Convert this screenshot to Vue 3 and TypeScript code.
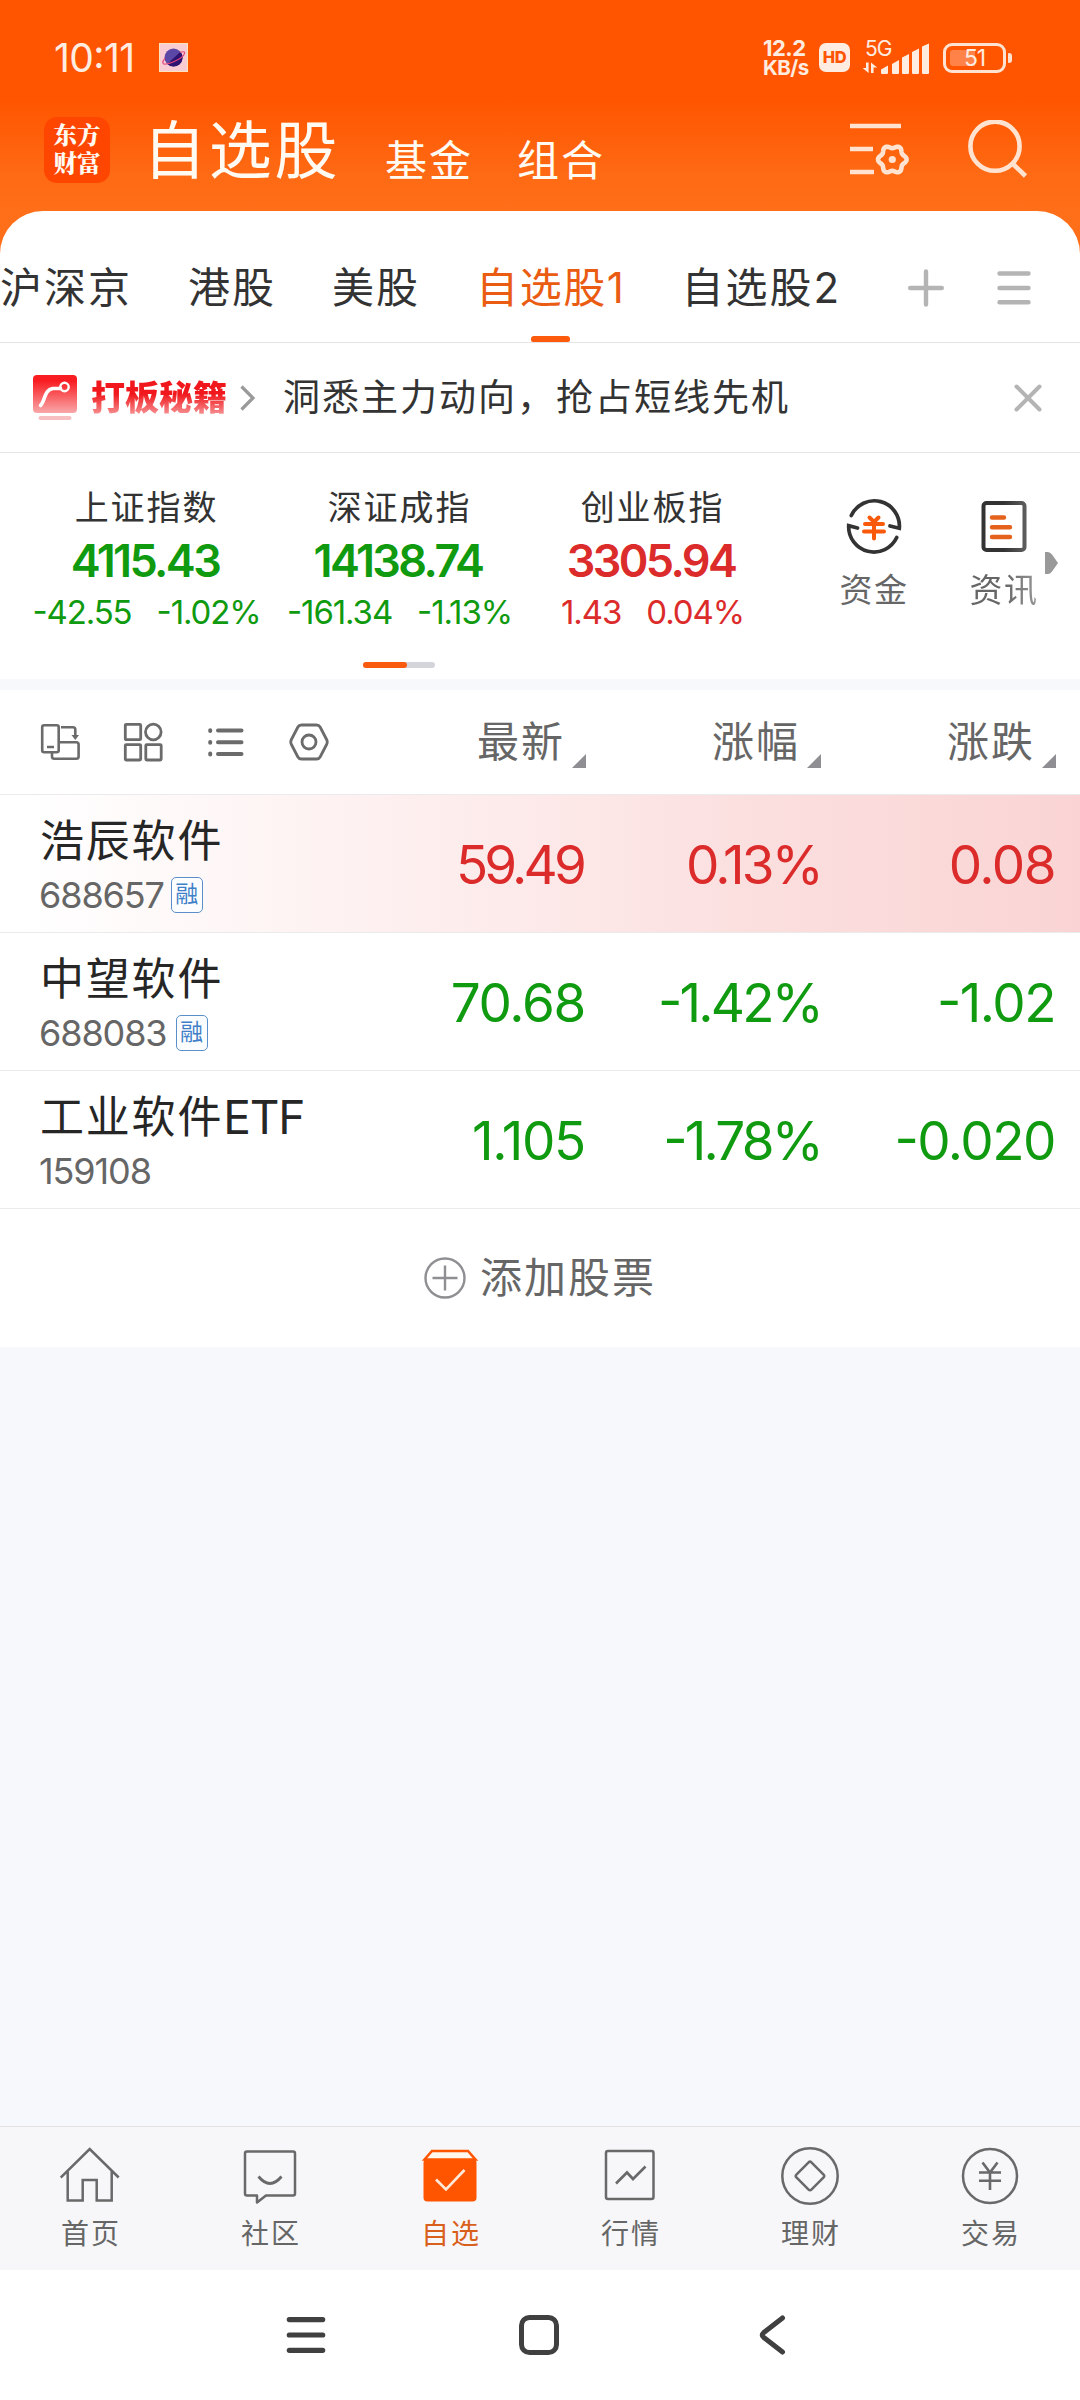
<script setup lang="ts">
interface IndexQuote {
  name: string
  price: string
  change: string
  percent: string
  trend: 'up' | 'down'
}

interface Stock {
  name: string
  suffix?: string
  code: string
  margin: boolean
  price: string
  percent: string
  change: string
  trend: 'up' | 'down'
  flash?: boolean
}

const marketTabs = ['沪深京', '港股', '美股', '自选股1', '自选股2']
const activeTab = '自选股1'

const indices: IndexQuote[] = [
  { name: '上证指数', price: '4115.43', change: '-42.55', percent: '-1.02%', trend: 'down' },
  { name: '深证成指', price: '14138.74', change: '-161.34', percent: '-1.13%', trend: 'down' },
  { name: '创业板指', price: '3305.94', change: '1.43', percent: '0.04%', trend: 'up' },
]

const columns = ['最新', '涨幅', '涨跌']

const stocks: Stock[] = [
  { name: '浩辰软件', code: '688657', margin: true, price: '59.49', percent: '0.13%', change: '0.08', trend: 'up', flash: true },
  { name: '中望软件', code: '688083', margin: true, price: '70.68', percent: '-1.42%', change: '-1.02', trend: 'down' },
  { name: '工业软件', suffix: 'ETF', code: '159108', margin: false, price: '1.105', percent: '-1.78%', change: '-0.020', trend: 'down' },
]

const navItems = [
  { key: 'home', label: '首页' },
  { key: 'community', label: '社区' },
  { key: 'watch', label: '自选' },
  { key: 'market', label: '行情' },
  { key: 'wealth', label: '理财' },
  { key: 'trade', label: '交易' },
]

// Six-lobed outline of the settings gear.
function gearPath(cx: number, cy: number, radius: number, depth: number): string {
  const points: string[] = []
  for (let deg = 0; deg < 360; deg += 5) {
    const a = (deg * Math.PI) / 180
    const r = radius + depth * Math.cos(6 * a)
    points.push(`${(cx + r * Math.cos(a)).toFixed(2)} ${(cy + r * Math.sin(a)).toFixed(2)}`)
  }
  return `M${points.join('L')}Z`
}
const gear = gearPath(42.3, 39.5, 12.8, 1.5)
</script>

<template>
  <div class="screen">
    <header class="top">
      <div class="status">
        <span class="clock">10:11</span>
        <svg class="planet" width="29" height="29" viewBox="0 0 29 29">
          <rect x=".5" y=".5" width="28" height="28" fill="#f8ccd2" stroke="#fbe3bd" />
          <circle cx="14.5" cy="14.5" r="9" fill="#5b47a5" />
          <path d="M21.5 8.8A9 9 0 0 1 8.3 21Z" fill="#2e1271" />
          <path d="M21 9.5c3-1.300 5-1 4.600.600-.6 3-6 6.600-11.500 8.900-5.500 2.200-10 3-10.300 1-.2-1.300 .8-3 2.200-4.500" fill="none" stroke="#e0457f" stroke-width="1.100" />
        </svg>
        <div class="speed"><span>12.2</span><span class="unit">KB/s</span></div>
        <span class="hd">HD</span>
        <div class="signal">
          <span class="net">5G</span>
          <svg width="68" height="32" viewBox="0 0 68 32" fill="#ffece0">
            <path d="M4 20.500h2.600V31L.6 26H4ZM9 31V20.500l6.200 5h-3.600V31Z" />
            <path d="M19 31v-3.500l7-4V31a1 1 0 0 1-1 1h-5a1 1 0 0 1-1-1ZM30 31V22l7-4v13a1 1 0 0 1-1 1h-5a1 1 0 0 1-1-1ZM40 31V15.500l7-3.500v19a1 1 0 0 1-1 1h-5a1 1 0 0 1-1-1ZM50 31V10l7-3.500V31a1 1 0 0 1-1 1h-5a1 1 0 0 1-1-1ZM60 31V4.500l7-3V31a1 1 0 0 1-1 1h-5a1 1 0 0 1-1-1Z" />
          </svg>
        </div>
        <div class="battery"><i></i><span>51</span></div>
        <b class="nub"></b>
      </div>

      <div class="titlebar">
        <div class="logo"><span>东方</span><span>财富</span></div>
        <h1>自选股</h1>
        <span class="sub">基金</span>
        <span class="sub second">组合</span>
        <svg class="filter" width="62" height="60" viewBox="0 0 62 60" fill="none" stroke="#ffe3d0" stroke-width="4.600">
          <path d="M0 6h51M0 29h23M0 52h24" />
          <path :d="gear" stroke-linejoin="round" />
          <circle cx="42.300" cy="39.500" r="3.600" fill="#ffe3d0" stroke="none" />
        </svg>
        <svg class="search" width="60" height="60" viewBox="0 0 60 60" fill="none" stroke="#ffe3d0" stroke-width="4.600">
          <circle cx="27" cy="26.200" r="24.600" />
          <path d="M44.500 43.500L57.500 56" />
        </svg>
      </div>
    </header>

    <section class="card">
      <nav class="tabs">
        <span v-for="tab in marketTabs" :key="tab" class="tab" :class="{ active: tab === activeTab }">{{ tab }}</span>
        <svg class="plus" width="36" height="38" viewBox="0 0 36 38" stroke="#b4b4b4" stroke-width="4.400" stroke-linecap="round">
          <path d="M2.200 19h31.600M18 2.500v33" />
        </svg>
        <svg class="menu" width="34" height="36" viewBox="0 0 34 36" stroke="#b4b4b4" stroke-width="4.400" stroke-linecap="round">
          <path d="M2.500 3.500h29M2.500 18h29M2.500 32.300h29" />
        </svg>
      </nav>

      <div class="promo">
        <svg width="44" height="46" viewBox="0 0 44 46" fill="none">
          <defs>
            <linearGradient id="promoRed" x1="0" y1="0" x2="0" y2="1">
              <stop offset=".15" stop-color="#f91c20" />
              <stop offset="1" stop-color="#f9a8aa" />
            </linearGradient>
          </defs>
          <rect width="44" height="38" rx="4" fill="url(#promoRed)" />
          <path d="M7.500 30.500C12 27 11 14.500 20 13.500h7.500" stroke="#fff" stroke-width="3.600" stroke-linecap="round" />
          <circle cx="31.500" cy="12" r="4.200" stroke="#fff" stroke-width="2.400" />
          <rect x="5.500" y="41" width="33" height="4" rx="2" fill="#f7bfc1" />
        </svg>
        <strong>打板秘籍</strong>
        <svg class="chev" width="16" height="26" viewBox="0 0 16 26" fill="none" stroke="#9a9a9a" stroke-width="3.200">
          <path d="M1.500 1.500L13 13 1.500 24.500" />
        </svg>
        <p>洞悉主力动向，抢占短线先机</p>
        <svg class="close" width="28" height="28" viewBox="0 0 28 28" stroke="#b4b4b4" stroke-width="4" stroke-linecap="round">
          <path d="M2.500 2.500l23 23M25.500 2.500l-23 23" />
        </svg>
      </div>

      <div class="indices">
        <div v-for="q in indices" :key="q.name" class="index" :class="q.trend">
          <span class="iname">{{ q.name }}</span>
          <span class="iprice">{{ q.price }}</span>
          <span class="ichange"><span>{{ q.change }}</span><span>{{ q.percent }}</span></span>
        </div>
        <div class="shortcut funds">
          <svg width="56" height="56" viewBox="0 0 56 56" fill="none" stroke="#333" stroke-width="3.700" stroke-linejoin="miter" stroke-linecap="round">
            <path d="M5.300 17.500A25.200 25.200 0 0 1 53.300 30.300L44 28" />
            <path d="M50.700 39.500A25.200 25.200 0 0 1 2.700 27.700L11.500 30" />
            <path d="M23.500 19.500l4.500 4.500 4.500-4.500M19 26h18M18 33.500h20M28 24v16.500" stroke="#f9590b" stroke-width="4" />
          </svg>
          <span>资金</span>
        </div>
        <div class="shortcut">
          <svg width="56" height="56" viewBox="0 0 56 56" fill="none" stroke-width="4" stroke-linecap="round">
            <defs>
              <linearGradient id="fade" x1="0" x2="1" y1="0" y2="0">
                <stop offset=".5" stop-color="#333" />
                <stop offset="1" stop-color="#5c5c5c" />
              </linearGradient>
            </defs>
            <rect x="7.500" y="5" width="41" height="47" rx="3" stroke="url(#fade)" />
            <path d="M16 19.500h12M16 29.300h18M16 39h18" stroke="#e5621d" stroke-width="4.400" />
          </svg>
          <span class="fading">资讯</span>
        </div>
        <svg class="more" width="14" height="24" viewBox="0 0 14 24"><path d="M0 1h3q2 0 4 2.500L13 12l-6 8.500Q5 23 3 23H0Z" fill="#999" /></svg>
      </div>
      <div class="pager"><i></i></div>
    </section>

    <section class="list">
      <div class="head">
        <div class="tools">
          <svg width="40" height="40" viewBox="0 0 40 40" fill="none" stroke="#6b6b6b" stroke-width="2.600">
            <rect x="2.200" y="3.200" width="16.500" height="27" rx="2" />
            <path d="M7 25h7M12 31v3.500q0 2.300 2.300 2.300h22q2.300 0 2.300-2.300v-12q0-2.300-2.300-2.300H19M21 5.200h12q2.300 0 2.300 2.300V15" />
            <path d="M31.500 13h7.500l-3.750 5Z" fill="#6b6b6b" stroke="none" />
          </svg>
          <svg width="40" height="40" viewBox="0 0 40 40" fill="none" stroke="#6b6b6b" stroke-width="2.800">
            <rect x="2.300" y="2.300" width="15.400" height="15.400" rx="1" />
            <circle cx="30.300" cy="10" r="7.800" />
            <rect x="2.300" y="22.600" width="15.400" height="15.400" rx="1" />
            <rect x="22.800" y="22.600" width="15.400" height="15.400" rx="1" />
          </svg>
          <svg width="40" height="40" viewBox="0 0 40 40" stroke="#6b6b6b" stroke-width="4" stroke-linecap="round">
            <path d="M4.200 8.200v.8M4.200 20v.8M4.200 31.600v.8" />
            <path d="M12 8.500h23.500M12 20.300h23.500M12 32h23.500" />
          </svg>
          <svg width="40" height="40" viewBox="0 0 40 40" fill="none" stroke="#6b6b6b" stroke-width="2.800">
            <path d="M12.500 3h15q2.500 0 3.600 2l6.500 12.500q1.300 2.500 0 5L31.100 35q-1.100 2-3.600 2h-15q-2.500 0-3.600-2L2.400 22.500q-1.300-2.500 0-5L8.900 5q1.100-2 3.600-2Z" />
            <circle cx="20" cy="20" r="7" />
          </svg>
        </div>
        <span v-for="c in columns" :key="c" class="col">{{ c }}<svg width="14" height="14" viewBox="0 0 14 14"><path d="M14 0v14H0Z" fill="#8e8e93" /></svg></span>
      </div>

      <div v-for="s in stocks" :key="s.code" class="row" :class="[s.trend, { flash: s.flash }]">
        <div class="who">
          <span class="sname">{{ s.name }}<span v-if="s.suffix" class="suffix">{{ s.suffix }}</span></span>
          <span class="scode">{{ s.code }}<em v-if="s.margin">融</em></span>
        </div>
        <span class="num price">{{ s.price }}</span>
        <span class="num percent">{{ s.percent }}</span>
        <span class="num change">{{ s.change }}</span>
      </div>

      <div class="add">
        <svg width="42" height="42" viewBox="0 0 42 42" fill="none" stroke="#8e8e93" stroke-width="2.400">
          <circle cx="21" cy="21" r="19.500" />
          <path d="M8.500 21h25M21 8.500v25" />
        </svg>
        <span>添加股票</span>
      </div>
    </section>

    <div class="blank"></div>

    <nav class="bottom">
      <div v-for="n in navItems" :key="n.key" class="item" :class="{ on: n.key === 'watch' }">
        <svg width="60" height="60" viewBox="0 0 60 60" fill="none" stroke="#696969" stroke-width="2.500">
          <path v-if="n.key === 'home'" d="M.7 32.500L29.700 4l29 28.500M7.700 26v29.500h15V35h14v20.500h15V26" />
          <g v-else-if="n.key === 'community'" stroke-linejoin="round">
            <path d="M7 6.500h46q2 0 2 2v40q0 2-2 2H26l-9 7v-7H7q-2 0-2-2v-40q0-2 2-2Z" />
            <path d="M18.500 31.500q11.500 14 23 0" stroke-width="2.800" />
          </g>
          <g v-else-if="n.key === 'watch'" stroke="#ff5500">
            <path d="M4.500 14.500L12 6h36l7.500 8.500Z" fill="#fff6ee" />
            <rect x="3.500" y="14" width="53" height="42.500" rx="4" fill="#ff5500" stroke="none" />
            <path d="M16 34.500l10 10L44.500 25" stroke="#ffe9da" stroke-width="2.600" />
          </g>
          <g v-else-if="n.key === 'market'">
            <rect x="6" y="6" width="47.500" height="48" rx="2" />
            <path d="M16 38.500l11-11 6 6.500L45.500 21.500" stroke-width="2.600" />
          </g>
          <g v-else-if="n.key === 'wealth'">
            <circle cx="30" cy="31" r="27.700" />
            <path d="M28.600 17.400q1.400-1.400 2.800 0l12.200 12.200q1.400 1.400 0 2.800L31.400 44.600q-1.400 1.400-2.800 0L16.400 32.400q-1.400-1.400 0-2.800Z" />
          </g>
          <g v-else>
            <circle cx="30" cy="31" r="27" />
            <path d="M22.500 17.500l7.500 10 7.500-10M19 27.500h22M19 35.700h22M30 27v18" stroke-width="2.600" />
          </g>
        </svg>
        <span>{{ n.label }}</span>
      </div>
    </nav>

    <footer class="system">
      <svg width="44" height="44" viewBox="0 0 44 44" stroke="#404040" stroke-width="5.200" stroke-linecap="round"><path d="M5.300 6.600h33.400M5.300 22h33.400M5.300 37.300h33.400" /></svg>
      <svg width="44" height="44" viewBox="0 0 44 44" fill="none" stroke="#404040" stroke-width="5"><rect x="4.500" y="4.500" width="35" height="35" rx="8" /></svg>
      <svg width="44" height="44" viewBox="0 0 44 44" fill="none" stroke="#404040" stroke-width="5" stroke-linecap="round"><path d="M32.500 5L13.500 19.800q-2.600 2.200 0 4.400L32.500 39" /></svg>
    </footer>
  </div>
</template>

<style>
body {
  background: #fff;
}
</style>

<style scoped>
.screen {
  width: 1080px;
  height: 2400px;
  display: flex;
  flex-direction: column;
  overflow: hidden;
  background: #f6f8fb;
  font-family: Inter, "Noto Sans CJK SC", sans-serif;
  font-feature-settings: "case";
  color: #333;
}
svg {
  display: block;
  flex: none;
}
.top {
  height: 254px;
  margin-bottom: -43px;
  flex: none;
  background: linear-gradient(#ff5500 100px, #ff6a14 175px, #ff6e18 211px);
}
.status {
  height: 115px;
  display: flex;
  align-items: center;
  padding-left: 54px;
  color: #ffece0;
}
.clock {
  width: 105px;
  font-size: 39px;
  letter-spacing: -.6px;
}
.speed {
  display: flex;
  flex-direction: column;
  width: 56px;
  margin-left: 575px;
  padding-top: 1px;
  font-size: 22px;
  font-weight: 700;
  line-height: 19px;
  letter-spacing: -.5px;
  white-space: nowrap;
}
.unit {
  font-size: 20.500px;
}
.hd {
  width: 31px;
  height: 29px;
  border-radius: 7px;
  background: #ffece0;
  color: #ff5500;
  font-size: 16.500px;
  font-weight: 800;
  line-height: 29px;
  text-align: center;
  letter-spacing: -.5px;
}
.signal {
  position: relative;
  margin-left: 12px;
}
.net {
  position: absolute;
  left: 3px;
  top: -2px;
  font-size: 21px;
  line-height: 18px;
  letter-spacing: -1px;
}
.battery {
  position: relative;
  box-sizing: border-box;
  width: 63px;
  height: 30px;
  margin-left: 13px;
  border: 3px solid #ffe3d0;
  border-radius: 9px;
  text-align: center;
  font-size: 23px;
  line-height: 25px;
  letter-spacing: -1.200px;
}
.battery i {
  position: absolute;
  left: 4px;
  top: 4px;
  width: 25px;
  height: 16px;
  border-radius: 3px 0 0 3px;
  background: #ff8248;
}
.battery span {
  position: relative;
}
.nub {
  width: 4px;
  height: 10px;
  margin-left: 2px;
  border-radius: 1px 3px 3px 1px;
  background: #ffe3d0;
}
.titlebar {
  height: 69px;
  display: flex;
  align-items: center;
  padding-left: 44px;
  color: #fffaf2;
}
.logo {
  width: 66px;
  height: 66px;
  border-radius: 13px;
  background: #ff4600;
  display: flex;
  flex-direction: column;
  align-items: center;
  justify-content: center;
  font-family: "Noto Serif CJK SC", "Noto Sans CJK SC", sans-serif;
  font-size: 23.500px;
  font-weight: 900;
  line-height: 28px;
  padding-bottom: 3px;
  box-sizing: border-box;
}
h1 {
  width: 242px;
  margin: 2px 0 0 33px;
  font-size: 63px;
  font-weight: 400;
  letter-spacing: 2.800px;
  line-height: 69px;
}
.sub {
  width: 132px;
  padding-top: 22px;
  font-size: 42px;
  letter-spacing: 2px;
  line-height: 44px;
}
.second {
  width: 333px;
}
.search {
  margin-left: 56px;
}
.card {
  flex: none;
  height: 468px;
  border-radius: 43px 43px 0 0;
  background: #fff;
}
.tabs {
  height: 131px;
  border-bottom: 1px solid #e4e4e6;
  display: flex;
}
.tab {
  position: relative;
  margin-right: 56px;
  font-size: 42px;
  line-height: 153px;
  height: 131px;
  letter-spacing: 2px;
  white-space: nowrap;
}
.active {
  color: #ea5c12;
  letter-spacing: 1.600px;
}
.active::after {
  content: "";
  position: absolute;
  left: 50%;
  bottom: 0;
  width: 39px;
  height: 6px;
  margin-left: -20px;
  border-radius: 3px 3px 2px 2px;
  background: #fc5a0c;
}
.plus {
  margin: 58px 0 0 auto;
}
.menu {
  margin: 59px 49px 0 53px;
}
.promo {
  height: 109px;
  border-bottom: 1px solid #e4e4e6;
  display: flex;
  align-items: center;
  padding: 0 38px 0 33px;
}
.promo strong {
  width: 149px;
  margin-left: 14px;
  font-size: 34px;
  font-weight: 900;
  line-height: 40px;
  white-space: nowrap;
  color: transparent;
  background: linear-gradient(#f0181c 40%, #f79a9c 95%);
  -webkit-background-clip: text;
  background-clip: text;
}
.promo p {
  margin: 1px auto 0 27px;
  font-size: 37px;
  line-height: 44px;
  letter-spacing: 2px;
}
.indices {
  height: 209px;
  display: flex;
  padding-left: 20px;
}
.index {
  width: 253px;
  display: flex;
  flex-direction: column;
  align-items: center;
}
.iname {
  margin-top: 35px;
  font-size: 34px;
  line-height: 40px;
  letter-spacing: 1.900px;
  color: #333;
}
.iprice {
  margin: 11px 3px 0 0;
  font-size: 45px;
  font-weight: 600;
  line-height: 44px;
  letter-spacing: -2.600px;
}
.ichange {
  display: flex;
  gap: 25px;
  margin-top: 9px;
  font-size: 33px;
  line-height: 40px;
  letter-spacing: -1.100px;
}
.up {
  color: #dc2b2b;
}
.down {
  color: #109a10;
}
.shortcut {
  width: 130px;
  margin-top: 45px;
  display: flex;
  flex-direction: column;
  align-items: center;
  font-size: 33px;
  line-height: 40px;
  letter-spacing: 1.500px;
  color: #666;
}
.shortcut span {
  margin-top: 16px;
}
.funds {
  margin-left: 30px;
}
.fading {
  color: transparent;
  background: linear-gradient(90deg, #666 50%, #999);
  -webkit-background-clip: text;
  background-clip: text;
}
.more {
  margin: 98px 0 0 -24px;
}
.pager {
  width: 72px;
  height: 6px;
  margin: 0 0 0 363px;
  border-radius: 3px;
  background: #d3d5da;
}
.pager i {
  display: block;
  width: 44px;
  height: 6px;
  border-radius: 3px;
  background: #f95a0e;
}
.list {
  flex: none;
  margin-top: 11px;
  background: #fff;
}
.head,
.row {
  display: flex;
  border-bottom: 1px solid #ebebed;
  padding-right: 24px;
}
.head {
  height: 104px;
  align-items: center;
}
.tools {
  display: flex;
  gap: 43px;
  width: 312px;
  padding-left: 40px;
}
.col {
  width: 235px;
  display: flex;
  justify-content: flex-end;
  align-items: center;
  font-size: 42px;
  line-height: 44px;
  letter-spacing: 2px;
  color: #666;
}
.tools + .col {
  width: 234px;
}
.col svg {
  margin: 38px 0 0 7px;
}
.row {
  height: 137px;
  align-items: center;
}
.flash {
  background: linear-gradient(90deg, #fff 2%, #fdeaea 48%, #fbdede 72%, #fad4d4);
}
.who {
  width: 351px;
  padding: 4px 0 0 40px;
}
.sname,
.scode {
  display: flex;
  align-items: center;
}
.sname {
  color: #262626;
  font-size: 44px;
  line-height: 54px;
  letter-spacing: 1.800px;
}
.suffix {
  font-size: 46px;
  letter-spacing: -1.200px;
}
.scode {
  height: 36px;
  margin: 9px 0 0 -1px;
  padding-bottom: 4px;
  font-size: 36px;
  line-height: 36px;
  letter-spacing: -1.100px;
  color: #666;
}
.scode em {
  box-sizing: border-box;
  width: 32px;
  height: 36px;
  margin-left: 9px;
  border: 1.500px solid #5b8fca;
  border-radius: 5px;
  background: #fbfdff;
  color: #3f7fc8;
  font-style: normal;
  font-size: 23px;
  line-height: 33px;
  text-align: center;
  letter-spacing: 0;
}
.flash .scode em {
  margin-left: 7px;
}
.num {
  box-sizing: border-box;
  width: 235px;
  padding-top: 3px;
  text-align: right;
  font-size: 53px;
  line-height: 60px;
}
.price {
  width: 195px;
  padding-right: 1px;
  letter-spacing: -1.300px;
}
.flash .price {
  padding-right: 3px;
  letter-spacing: -3.800px;
}
.percent {
  letter-spacing: -2.800px;
}
.change {
  padding-right: 1px;
  letter-spacing: -1.500px;
}
.add {
  height: 138px;
  display: flex;
  align-items: center;
  justify-content: center;
  gap: 14px;
  font-size: 42px;
  line-height: 44px;
  letter-spacing: 2px;
  color: #666;
}
.blank {
  flex: 1;
}
.bottom {
  flex: none;
  height: 143px;
  border-top: 1px solid #e2e2e5;
  background: #f7f7fa;
  display: flex;
}
.item {
  width: 180px;
  padding-top: 18px;
  display: flex;
  flex-direction: column;
  align-items: center;
  font-size: 28px;
  line-height: 34px;
  letter-spacing: 2px;
  color: #666;
}
.item span {
  margin: 12px 0 0 2px;
}
.on {
  color: #d9601c;
}
.system {
  flex: none;
  height: 130px;
  background: #fff;
  display: flex;
  align-items: center;
  gap: 189px;
  padding-left: 284px;
}
</style>
